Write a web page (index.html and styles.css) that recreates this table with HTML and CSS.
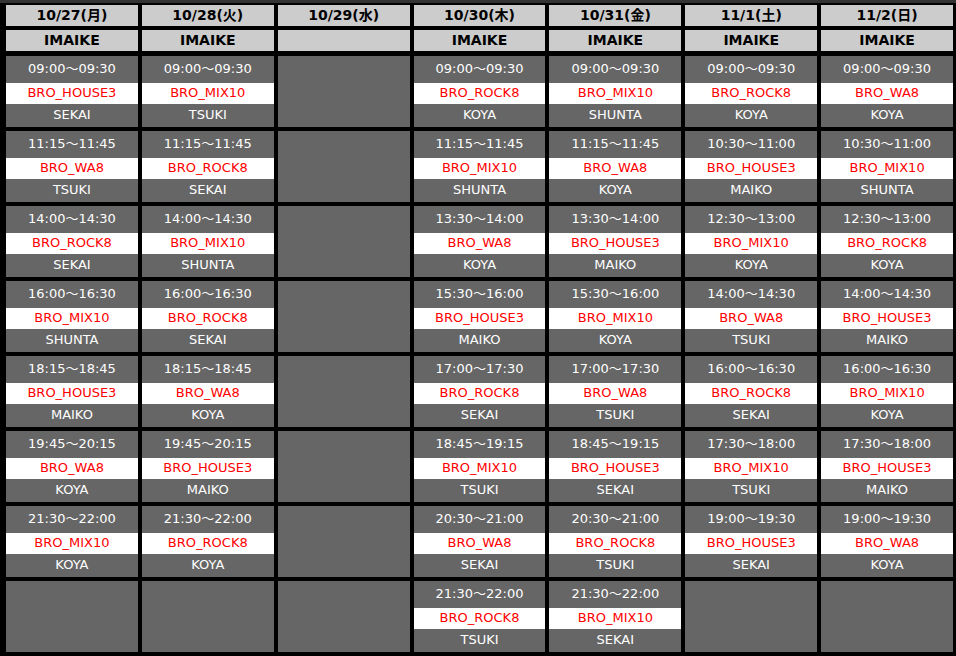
FILE: index.html
```html
<!DOCTYPE html>
<html lang="ja">
<head>
<meta charset="utf-8">
<title>Schedule</title>
<link rel="stylesheet" href="styles.css">
</head>
<body>
<div class="topbar"></div>
<div class="schedule">
  <div class="day">10/27(月)</div>
  <div class="day">10/28(火)</div>
  <div class="day">10/29(水)</div>
  <div class="day">10/30(木)</div>
  <div class="day">10/31(金)</div>
  <div class="day">11/1(土)</div>
  <div class="day">11/2(日)</div>

  <div class="place">IMAIKE</div>
  <div class="place">IMAIKE</div>
  <div class="place"></div>
  <div class="place">IMAIKE</div>
  <div class="place">IMAIKE</div>
  <div class="place">IMAIKE</div>
  <div class="place">IMAIKE</div>

  <!-- row 1 -->
  <div class="slot"><div class="time">09:00～09:30</div><div class="prog">BRO_HOUSE3</div><div class="dj">SEKAI</div></div>
  <div class="slot"><div class="time">09:00～09:30</div><div class="prog">BRO_MIX10</div><div class="dj">TSUKI</div></div>
  <div class="slot"></div>
  <div class="slot"><div class="time">09:00～09:30</div><div class="prog">BRO_ROCK8</div><div class="dj">KOYA</div></div>
  <div class="slot"><div class="time">09:00～09:30</div><div class="prog">BRO_MIX10</div><div class="dj">SHUNTA</div></div>
  <div class="slot"><div class="time">09:00～09:30</div><div class="prog">BRO_ROCK8</div><div class="dj">KOYA</div></div>
  <div class="slot"><div class="time">09:00～09:30</div><div class="prog">BRO_WA8</div><div class="dj">KOYA</div></div>

  <!-- row 2 -->
  <div class="slot"><div class="time">11:15～11:45</div><div class="prog">BRO_WA8</div><div class="dj">TSUKI</div></div>
  <div class="slot"><div class="time">11:15～11:45</div><div class="prog">BRO_ROCK8</div><div class="dj">SEKAI</div></div>
  <div class="slot"></div>
  <div class="slot"><div class="time">11:15～11:45</div><div class="prog">BRO_MIX10</div><div class="dj">SHUNTA</div></div>
  <div class="slot"><div class="time">11:15～11:45</div><div class="prog">BRO_WA8</div><div class="dj">KOYA</div></div>
  <div class="slot"><div class="time">10:30～11:00</div><div class="prog">BRO_HOUSE3</div><div class="dj">MAIKO</div></div>
  <div class="slot"><div class="time">10:30～11:00</div><div class="prog">BRO_MIX10</div><div class="dj">SHUNTA</div></div>

  <!-- row 3 -->
  <div class="slot"><div class="time">14:00～14:30</div><div class="prog">BRO_ROCK8</div><div class="dj">SEKAI</div></div>
  <div class="slot"><div class="time">14:00～14:30</div><div class="prog">BRO_MIX10</div><div class="dj">SHUNTA</div></div>
  <div class="slot"></div>
  <div class="slot"><div class="time">13:30～14:00</div><div class="prog">BRO_WA8</div><div class="dj">KOYA</div></div>
  <div class="slot"><div class="time">13:30～14:00</div><div class="prog">BRO_HOUSE3</div><div class="dj">MAIKO</div></div>
  <div class="slot"><div class="time">12:30～13:00</div><div class="prog">BRO_MIX10</div><div class="dj">KOYA</div></div>
  <div class="slot"><div class="time">12:30～13:00</div><div class="prog">BRO_ROCK8</div><div class="dj">KOYA</div></div>

  <!-- row 4 -->
  <div class="slot"><div class="time">16:00～16:30</div><div class="prog">BRO_MIX10</div><div class="dj">SHUNTA</div></div>
  <div class="slot"><div class="time">16:00～16:30</div><div class="prog">BRO_ROCK8</div><div class="dj">SEKAI</div></div>
  <div class="slot"></div>
  <div class="slot"><div class="time">15:30～16:00</div><div class="prog">BRO_HOUSE3</div><div class="dj">MAIKO</div></div>
  <div class="slot"><div class="time">15:30～16:00</div><div class="prog">BRO_MIX10</div><div class="dj">KOYA</div></div>
  <div class="slot"><div class="time">14:00～14:30</div><div class="prog">BRO_WA8</div><div class="dj">TSUKI</div></div>
  <div class="slot"><div class="time">14:00～14:30</div><div class="prog">BRO_HOUSE3</div><div class="dj">MAIKO</div></div>

  <!-- row 5 -->
  <div class="slot"><div class="time">18:15～18:45</div><div class="prog">BRO_HOUSE3</div><div class="dj">MAIKO</div></div>
  <div class="slot"><div class="time">18:15～18:45</div><div class="prog">BRO_WA8</div><div class="dj">KOYA</div></div>
  <div class="slot"></div>
  <div class="slot"><div class="time">17:00～17:30</div><div class="prog">BRO_ROCK8</div><div class="dj">SEKAI</div></div>
  <div class="slot"><div class="time">17:00～17:30</div><div class="prog">BRO_WA8</div><div class="dj">TSUKI</div></div>
  <div class="slot"><div class="time">16:00～16:30</div><div class="prog">BRO_ROCK8</div><div class="dj">SEKAI</div></div>
  <div class="slot"><div class="time">16:00～16:30</div><div class="prog">BRO_MIX10</div><div class="dj">KOYA</div></div>

  <!-- row 6 -->
  <div class="slot"><div class="time">19:45～20:15</div><div class="prog">BRO_WA8</div><div class="dj">KOYA</div></div>
  <div class="slot"><div class="time">19:45～20:15</div><div class="prog">BRO_HOUSE3</div><div class="dj">MAIKO</div></div>
  <div class="slot"></div>
  <div class="slot"><div class="time">18:45～19:15</div><div class="prog">BRO_MIX10</div><div class="dj">TSUKI</div></div>
  <div class="slot"><div class="time">18:45～19:15</div><div class="prog">BRO_HOUSE3</div><div class="dj">SEKAI</div></div>
  <div class="slot"><div class="time">17:30～18:00</div><div class="prog">BRO_MIX10</div><div class="dj">TSUKI</div></div>
  <div class="slot"><div class="time">17:30～18:00</div><div class="prog">BRO_HOUSE3</div><div class="dj">MAIKO</div></div>

  <!-- row 7 -->
  <div class="slot"><div class="time">21:30～22:00</div><div class="prog">BRO_MIX10</div><div class="dj">KOYA</div></div>
  <div class="slot"><div class="time">21:30～22:00</div><div class="prog">BRO_ROCK8</div><div class="dj">KOYA</div></div>
  <div class="slot"></div>
  <div class="slot"><div class="time">20:30～21:00</div><div class="prog">BRO_WA8</div><div class="dj">SEKAI</div></div>
  <div class="slot"><div class="time">20:30～21:00</div><div class="prog">BRO_ROCK8</div><div class="dj">TSUKI</div></div>
  <div class="slot"><div class="time">19:00～19:30</div><div class="prog">BRO_HOUSE3</div><div class="dj">SEKAI</div></div>
  <div class="slot"><div class="time">19:00～19:30</div><div class="prog">BRO_WA8</div><div class="dj">KOYA</div></div>

  <!-- row 8 -->
  <div class="slot"></div>
  <div class="slot"></div>
  <div class="slot"></div>
  <div class="slot"><div class="time">21:30～22:00</div><div class="prog">BRO_ROCK8</div><div class="dj">TSUKI</div></div>
  <div class="slot"><div class="time">21:30～22:00</div><div class="prog">BRO_MIX10</div><div class="dj">SEKAI</div></div>
  <div class="slot"></div>
  <div class="slot"></div>
</div>
</body>
</html>
```
FILE: styles.css
```css
html, body {
  margin: 0;
  padding: 0;
  background: #000;
  font-family: "DejaVu Sans", "Noto Sans CJK JP", sans-serif;
}

.topbar {
  height: 3px;
  background: #333;
}

.schedule {
  display: grid;
  grid-template-columns: repeat(7, 1fr);
  grid-template-rows: 21px 22px repeat(8, 71px);
  gap: 4px;
  padding: 2px 3px 4px 6px;
}

.day,
.place {
  background: #ccc;
  color: #000;
  font-weight: bold;
  font-size: 14px;
  line-height: 20px;
  height: 21px;
  text-align: center;
  white-space: nowrap;
}

.slot {
  background: #666;
  color: #fff;
  font-size: 13px;
  text-align: center;
  white-space: nowrap;
}

.time {
  height: 27px;
  line-height: 25px;
}

.prog {
  background: #fff;
  color: #f00;
  height: 21px;
  line-height: 20px;
}

.dj {
  height: 23px;
  line-height: 21px;
}
```
